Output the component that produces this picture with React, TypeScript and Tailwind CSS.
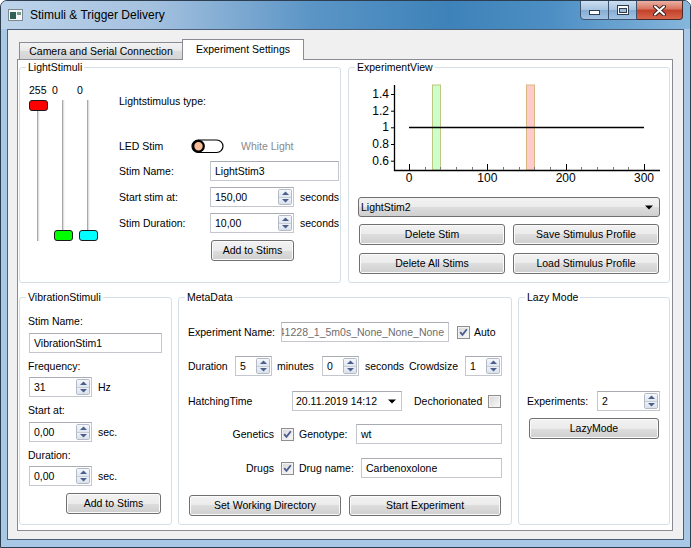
import React from "react";

const Up = () => (
  <svg width="7" height="4" viewBox="0 0 7 4">
    <path d="M0 4L3.5 0.5L7 4Z" fill="#4a5f8c" />
  </svg>
);
const Down = () => (
  <svg width="7" height="4" viewBox="0 0 7 4">
    <path d="M0 0L3.5 3.5L7 0Z" fill="#4a5f8c" />
  </svg>
);
const Caret = () => (
  <svg width="8" height="5" viewBox="0 0 8 5">
    <path d="M0 0.5L4 4.5L8 0.5Z" fill="#000" />
  </svg>
);

function Spin({ value, className }: { value: string; className: string }) {
  return (
    <div className={`flex h-[20px] border border-[#c4c7cd] border-t-[#a9acb2] bg-white ${className}`}>
      <span className="flex flex-1 items-center pl-[4px]">{value}</span>
      <div className="my-[1px] mr-[1px] flex w-[14px] flex-col overflow-hidden rounded-[2px] border border-[#b4bac6]">
        <div className="flex flex-1 items-center justify-center border-b border-[#c6ccd6] bg-[linear-gradient(#f4f7fb,#e0e7f0)]">
          <Up />
        </div>
        <div className="flex flex-1 items-center justify-center bg-[linear-gradient(#eef2f7,#d9e1ec)]">
          <Down />
        </div>
      </div>
    </div>
  );
}

function Field({ value, className }: { value: string; className: string }) {
  return (
    <div className={`flex h-[20px] items-center whitespace-nowrap border border-[#c4c7cd] border-t-[#a9acb2] bg-white pl-[4px] ${className}`}>
      {value}
    </div>
  );
}

function Btn({ label, className }: { label: string; className: string }) {
  return (
    <button
      type="button"
      className={`flex h-[21px] items-center justify-center rounded-[3px] border border-[#707070] bg-[linear-gradient(#f2f2f2,#ebebeb_50%,#dddddd_50%,#cfcfcf)] text-black shadow-[inset_0_0_0_1px_#fbfbfb] ${className}`}
    >
      {label}
    </button>
  );
}

function Check({ on }: { on?: boolean }) {
  return (
    <span className="flex h-[13px] w-[13px] shrink-0 items-center justify-center border border-[#8f8f8f] bg-[linear-gradient(135deg,#d8d8d8,#fafafa)] shadow-[inset_0_0_0_1px_#f2f2f2]">
      {on && (
        <svg width="9" height="9" viewBox="0 0 9 9">
          <path d="M1.2 4.2L3.5 6.8L7.8 1.2" stroke="#4b5c8e" strokeWidth="1.8" fill="none" />
        </svg>
      )}
    </span>
  );
}

function Group({ title, className, children }: { title: string; className: string; children?: React.ReactNode }) {
  return (
    <fieldset className={`min-w-0 shrink-0 rounded-[3px] border border-[#d5dfe5] p-0 ${className}`}>
      <legend className="ml-[6px] px-[2px] leading-[13px]">{title}</legend>
      {children}
    </fieldset>
  );
}

function Slider({ color, top }: { color: string; top?: boolean }) {
  return (
    <div className="relative flex h-[141px] w-[19px] justify-center">
      <div className="h-full w-[3px] border-l border-r border-l-[#a9a9a9] border-r-[#f7f7f7] bg-[#dedede]" />
      <div className={`absolute left-0 h-[11px] w-[19px] rounded-[3px] border border-[#1a1a1a] ${color} ${top ? "top-0" : "bottom-0"}`} />
    </div>
  );
}

const X0 = 409;
const PX = 235 / 300;
const xs = Array.from({ length: 16 }, (_, i) => i * 20);
const yLabels = [
  { t: "1.4", y: 94 },
  { t: "1.2", y: 110.7 },
  { t: "1", y: 127.3 },
  { t: "0.8", y: 144 },
  { t: "0.6", y: 160.7 },
];

function Chart() {
  return (
    <svg width="320" height="108" viewBox="349 78 320 108" fontFamily="'Liberation Sans', Arial, sans-serif" fontSize="12">
      <rect x="432.5" y="85" width="8" height="85" fill="#ccffcc" stroke="#bcc77f" />
      <rect x="526.5" y="85" width="8" height="85" fill="#ffcccc" stroke="#d8b780" />
      <line x1="409" y1="127.5" x2="644" y2="127.5" stroke="#000" strokeWidth="1.3" />
      <line x1="394.5" y1="85" x2="394.5" y2="171" stroke="#000" strokeWidth="1.3" />
      <line x1="394" y1="170.5" x2="660" y2="170.5" stroke="#000" strokeWidth="1.3" />
      {yLabels.map((l) => (
        <g key={l.t}>
          <line x1="391" y1={l.y + 0.5} x2="394" y2={l.y + 0.5} stroke="#000" />
          <text x="389" y={l.y + 4} textAnchor="end">{l.t}</text>
        </g>
      ))}
      {xs.map((v) => {
        const x = Math.round(X0 + v * PX) + 0.5;
        const major = v % 100 === 0;
        return <line key={v} x1={x} y1={major ? 164 : 167} x2={x} y2="170" stroke={major ? "#000" : "#777"} />;
      })}
      {[0, 100, 200, 300].map((v) => (
        <text key={v} x={X0 + v * PX} y="182" textAnchor="middle">{v}</text>
      ))}
    </svg>
  );
}

function TitleBar() {
  return (
    <div className="flex h-[28px] shrink-0 items-center bg-[linear-gradient(90deg,#bdd3ea_0%,#a4c1df_22%,#5b95c6_45%,#3d82b9_65%,#4d8fc4_80%,#86b6dc_100%)]">
      <svg className="ml-[7px]" width="15" height="12" viewBox="0 0 15 12">
        <rect x="0.5" y="0.5" width="14" height="11" fill="#f4f6f8" stroke="#7d8790" />
        <rect x="2" y="3" width="6" height="7" fill="#2f5f55" />
        <rect x="9" y="3" width="4" height="3" fill="#6f9e8a" />
      </svg>
      <span className="ml-[7px] text-[12px] text-black">Stimuli &amp; Trigger Delivery</span>
      <div className="mb-auto ml-auto mr-[7px] -mt-[1px] flex h-[20px]">
        <div className="flex w-[29px] items-center justify-center rounded-bl-[4px] border border-[#3d5470] bg-[linear-gradient(#cddff0,#a6c3e0_50%,#86acd2_51%,#a2c4e4)]">
          <svg width="11" height="5" viewBox="0 0 11 5" className="mt-[5px]">
            <rect x="0.5" y="0.5" width="10" height="4" fill="#fff" stroke="#2f3f52" />
          </svg>
        </div>
        <div className="flex w-[28px] items-center justify-center border border-l-0 border-[#3d5470] bg-[linear-gradient(#cddff0,#a6c3e0_50%,#86acd2_51%,#a2c4e4)]">
          <svg width="12" height="10" viewBox="0 0 12 10">
            <rect x="0.5" y="0.5" width="11" height="9" fill="#fff" stroke="#2f3f52" />
            <rect x="2.5" y="3.5" width="7" height="4" fill="#9fb9d4" stroke="#2f3f52" />
          </svg>
        </div>
        <div className="flex w-[46px] items-center justify-center rounded-br-[4px] border border-l-0 border-[#4a2a24] bg-[linear-gradient(#eab1a3,#d8735f_45%,#c2402a_50%,#d8664c)]">
          <svg width="13" height="11" viewBox="0 0 13 11">
            <path d="M2 1.5L11 9.5M11 1.5L2 9.5" stroke="#3a2420" strokeWidth="4" strokeLinecap="round" />
            <path d="M2 1.5L11 9.5M11 1.5L2 9.5" stroke="#fff" strokeWidth="2" strokeLinecap="round" />
          </svg>
        </div>
      </div>
    </div>
  );
}

export default function App() {
  return (
    <div className="flex h-[548px] w-[691px] flex-col overflow-hidden rounded-t-[7px] border border-[#2d3e50] bg-[#a9c8e6] font-['Liberation_Sans',Arial,sans-serif] text-[10.5px] leading-[13px] text-black">
      <TitleBar />
      <div className="flex-1 px-[6px] pb-[7px]">
        <div className="flex h-full flex-col border border-[#4b6078] bg-[#f0f0f0] pb-[8px] pl-[9px] pr-[10px] pt-[9px]">
          {/* tabs */}
          <div className="flex h-[20px] items-end pl-[2px]">
            <div className="flex h-[17px] w-[164px] items-center justify-center border border-b-0 border-[#898c95] bg-[linear-gradient(#f3f3f3,#e8e8e8_50%,#dcdcdc_51%,#d4d4d4)]">
              Camera and Serial Connection
            </div>
            <div className="relative z-10 -mb-[1px] -ml-[1px] flex h-[21px] w-[122px] items-center justify-center border border-b-0 border-[#898c95] bg-white pb-[1px]">
              Experiment Settings
            </div>
          </div>

          {/* pane */}
          <div className="flex flex-1 flex-col gap-[8px] border border-[#898c95] bg-white px-[1px] pt-[1px]">
            <div className="flex gap-[7px]">
              <Group title="LightStimuli" className="h-[222px] w-[322px]">
                <div className="flex">
                  <div className="ml-[9px] mt-[10px]">
                    <div className="flex h-[12px]">
                      <span className="w-[23px]">255</span>
                      <span className="w-[25px]">0</span>
                      <span>0</span>
                    </div>
                    <div className="mt-[4px] flex gap-[6px]">
                      <Slider color="bg-[#ff0000]" top />
                      <Slider color="bg-[#00ff00]" />
                      <Slider color="bg-[#00ffff]" />
                    </div>
                  </div>
                  <div className="ml-[21px] flex flex-col">
                    <div className="mt-[21px]">Lightstimulus type:</div>
                    <div className="mt-[31px] flex h-[14px] items-center">
                      <span className="w-[72px]">LED Stim</span>
                      <svg width="33" height="15" viewBox="0 0 33 15">
                        <rect x="1" y="1" width="31" height="12.5" rx="6.25" fill="#fff" stroke="#000" strokeWidth="1.2" />
                        <circle cx="7.5" cy="7.25" r="5.3" fill="#f8bd98" stroke="#000" strokeWidth="2.2" />
                      </svg>
                      <span className="ml-[17px] text-[#8a8a8a]">White Light</span>
                    </div>
                    <div className="mt-[8px] flex h-[20px] items-center">
                      <span className="w-[91px]">Stim Name:</span>
                      <Field value="LightStim3" className="w-[129px]" />
                    </div>
                    <div className="mt-[6px] flex h-[20px] items-center">
                      <span className="w-[91px]">Start stim at:</span>
                      <Spin value="150,00" className="w-[84px]" />
                      <span className="ml-[6px]">seconds</span>
                    </div>
                    <div className="mt-[6px] flex h-[20px] items-center">
                      <span className="w-[91px]">Stim Duration:</span>
                      <Spin value="10,00" className="w-[84px]" />
                      <span className="ml-[6px]">seconds</span>
                    </div>
                    <Btn label="Add to Stims" className="ml-[92px] mt-[7px] w-[83px]" />
                  </div>
                </div>
              </Group>

              <Group title="ExperimentView" className="h-[222px] w-[322px]">
                <div className="mt-[4px] h-[108px]">
                  <Chart />
                </div>
                <div className="ml-[9px] mt-[11px] flex h-[20px] w-[302px] items-center justify-between rounded-[3px] border border-[#707070] bg-[linear-gradient(#f2f2f2,#ebebeb_50%,#dddddd_50%,#cfcfcf)] pl-[2px] pr-[6px]">
                  <span>LightStim2</span>
                  <Caret />
                </div>
                <div className="ml-[10px] mt-[7px] flex gap-[8px]">
                  <Btn label="Delete Stim" className="w-[146px]" />
                  <Btn label="Save Stimulus Profile" className="w-[146px]" />
                </div>
                <div className="ml-[10px] mt-[8px] flex gap-[8px]">
                  <Btn label="Delete All Stims" className="w-[146px]" />
                  <Btn label="Load Stimulus Profile" className="w-[146px]" />
                </div>
              </Group>
            </div>

            <div className="flex gap-[6px]">
              <Group title="VibrationStimuli" className="h-[234px] w-[153px]">
                <div className="flex flex-col pl-[8px]">
                  <div className="mt-[11px]">Stim Name:</div>
                  <Field value="VibrationStim1" className="ml-[1px] mt-[5px] w-[133px]" />
                  <div className="mt-[7px]">Frequency:</div>
                  <div className="ml-[1px] mt-[4px] flex items-center">
                    <Spin value="31" className="w-[63px]" />
                    <span className="ml-[6px]">Hz</span>
                  </div>
                  <div className="mt-[7px]">Start at:</div>
                  <div className="ml-[1px] mt-[5px] flex items-center">
                    <Spin value="0,00" className="w-[63px]" />
                    <span className="ml-[6px]">sec.</span>
                  </div>
                  <div className="mt-[7px]">Duration:</div>
                  <div className="ml-[1px] mt-[4px] flex items-center">
                    <Spin value="0,00" className="w-[63px]" />
                    <span className="ml-[6px]">sec.</span>
                  </div>
                  <Btn label="Add to Stims" className="ml-[38px] mt-[7px] w-[95px]" />
                </div>
              </Group>

              <Group title="MetaData" className="h-[234px] w-[334px]">
                <div className="flex flex-col pl-[9px]">
                  <div className="mt-[18px] flex h-[20px] items-center">
                    <span className="w-[93px]">Experiment Name:</span>
                    <div className="flex h-[20px] w-[168px] items-center justify-end overflow-hidden whitespace-nowrap border border-[#c4c7cd] border-t-[#a9acb2] bg-white pr-[4px] text-[#6d6d6d]">
                      141228_1_5m0s_None_None_None
                    </div>
                    <span className="ml-[8px]"><Check on /></span>
                    <span className="ml-[4px]">Auto</span>
                  </div>
                  <div className="mt-[14px] flex h-[20px] items-center">
                    <span className="w-[47px]">Duration</span>
                    <Spin value="5" className="w-[37px]" />
                    <span className="ml-[5px] w-[45px]">minutes</span>
                    <Spin value="0" className="w-[37px]" />
                    <span className="ml-[6px] w-[44px]">seconds</span>
                    <span className="w-[56px]">Crowdsize</span>
                    <Spin value="1" className="w-[37px]" />
                  </div>
                  <div className="mt-[15px] flex h-[20px] items-center">
                    <span className="w-[104px]">HatchingTime</span>
                    <div className="flex h-[20px] w-[110px] items-center justify-between border border-[#c4c7cd] border-t-[#a9acb2] bg-white pl-[3px] pr-[5px]">
                      <span>20.11.2019 14:12</span>
                      <Caret />
                    </div>
                    <span className="ml-[12px] w-[74px]">Dechorionated</span>
                    <Check />
                  </div>
                  <div className="mt-[13px] flex h-[20px] items-center">
                    <span className="w-[86px] text-right">Genetics</span>
                    <span className="ml-[7px]"><Check on /></span>
                    <span className="ml-[5px] w-[57px]">Genotype:</span>
                    <Field value="wt" className="w-[146px]" />
                  </div>
                  <div className="mt-[14px] flex h-[20px] items-center">
                    <span className="w-[86px] text-right">Drugs</span>
                    <span className="ml-[7px]"><Check on /></span>
                    <span className="ml-[5px] w-[62px]">Drug name:</span>
                    <Field value="Carbenoxolone" className="w-[141px]" />
                  </div>
                  <div className="ml-[1px] mt-[17px] flex gap-[8px]">
                    <Btn label="Set Working Directory" className="w-[152px]" />
                    <Btn label="Start Experiment" className="w-[152px]" />
                  </div>
                </div>
              </Group>

              <Group title="Lazy Mode" className="h-[234px] w-[152px]">
                <div className="flex flex-col pl-[8px]">
                  <div className="mt-[87px] flex h-[20px] items-center">
                    <span className="w-[70px]">Experiments:</span>
                    <Spin value="2" className="w-[63px]" />
                  </div>
                  <Btn label="LazyMode" className="ml-[2px] mt-[7px] w-[130px]" />
                </div>
              </Group>
            </div>
          </div>
        </div>
      </div>
    </div>
  );
}
